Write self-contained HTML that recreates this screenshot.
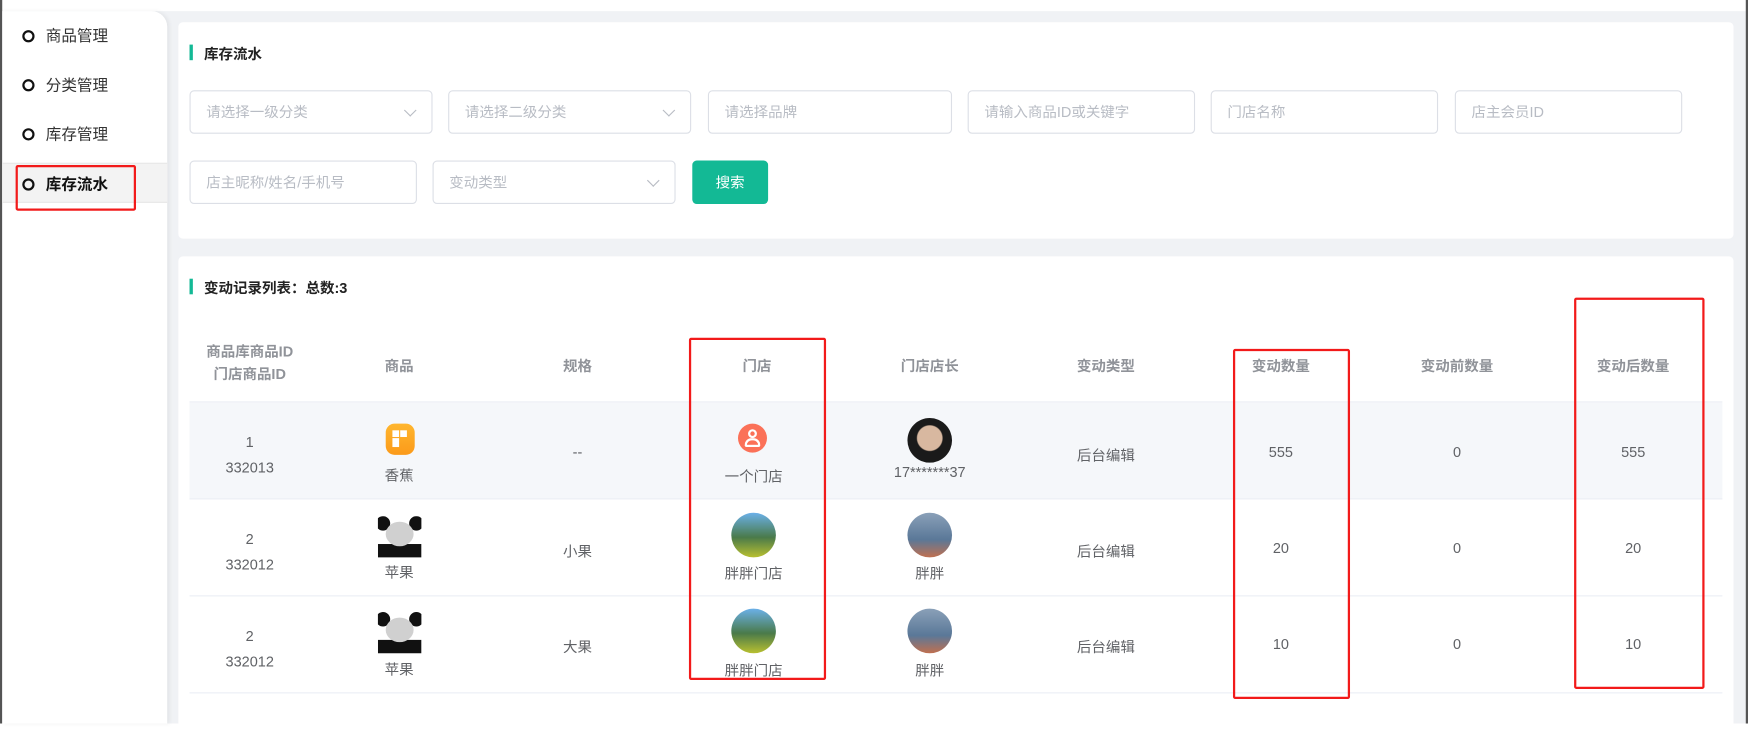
<!DOCTYPE html>
<html><head><meta charset="utf-8"><style>
*{margin:0;padding:0;box-sizing:border-box}
html,body{width:1748px;height:723px;overflow:hidden;background:#fff}
#w{position:absolute;left:0;top:0;width:1568px;height:649px;transform:scale(1.1148);transform-origin:0 0;background:#f0f2f5;font-family:"Liberation Sans","Noto Sans CJK SC",sans-serif;font-size:13px;color:#606266}
.a{position:absolute}
.menu{left:20px;font-size:14px;color:#333}
.menu i{position:absolute;left:0;top:3px;width:11px;height:11px;border:2px solid #111;border-radius:50%}
.menu span{position:absolute;left:21px;top:-2px;white-space:nowrap}
.card{background:#fff;border-radius:4px}
.ttl{font-weight:bold;color:#222;font-size:13px}
.ttl:before{content:"";position:absolute;left:-13px;top:2px;width:3px;height:14px;background:#13b995}
.in{border:1px solid #dcdfe6;border-radius:4px;height:39px;color:#b8bcc4;font-size:13px;line-height:37px;padding-left:14px;background:#fff}
.in.s:after{content:"";position:absolute;right:15px;top:13px;width:7px;height:7px;border-right:1px solid #b8bcc4;border-bottom:1px solid #b8bcc4;transform:rotate(45deg)}
.red{border:2px solid #f21a1a;border-radius:2px}
.c{text-align:center;width:160px;margin-left:-80px}
.h{color:#909399;font-weight:bold}
.row{left:170px;width:1375px;border-bottom:1px solid #ebeef5}
.av{position:absolute;border-radius:50%;width:40px;height:40px}
.pd{position:absolute;width:39px;height:37px;background:#fff;overflow:hidden}
.pd b{position:absolute;background:#111;border-radius:50%}
</style></head><body><div id="w">
<div class="a" style="left:0;top:0;width:1568px;height:10px;background:#fff"></div>
<div class="a" style="left:0;top:0;width:2px;height:649px;background:#555"></div>
<div class="a" style="left:1566px;top:0;width:2px;height:649px;background:#555"></div>
<div class="a" style="left:2px;top:10px;width:148px;height:639px;background:#fff;border-top-right-radius:14px;box-shadow:2px 0 4px rgba(0,0,0,.06)"></div>
<div class="a" style="left:2px;top:146px;width:148px;height:36px;background:#f3f3f3;border-top:1px solid #e8e8e8;border-bottom:1px solid #e8e8e8"></div>
<div class="a menu" style="top:24px"><i></i><span>商品管理</span></div>
<div class="a menu" style="top:68px"><i></i><span>分类管理</span></div>
<div class="a menu" style="top:112px"><i></i><span>库存管理</span></div>
<div class="a menu" style="top:157px;font-weight:bold;color:#111"><i></i><span>库存流水</span></div>
<div class="a red" style="left:14px;top:148px;width:108px;height:41px"></div>

<div class="a card" style="left:160px;top:20px;width:1395px;height:194px"></div>
<div class="a ttl" style="left:183px;top:38px">库存流水</div>
<div class="a in s" style="left:170px;top:81px;width:218px">请选择一级分类</div>
<div class="a in s" style="left:402px;top:81px;width:218px">请选择二级分类</div>
<div class="a in" style="left:635px;top:81px;width:219px">请选择品牌</div>
<div class="a in" style="left:868px;top:81px;width:204px">请输入商品ID或关键字</div>
<div class="a in" style="left:1086px;top:81px;width:204px">门店名称</div>
<div class="a in" style="left:1305px;top:81px;width:204px">店主会员ID</div>
<div class="a in" style="left:170px;top:144px;width:204px">店主昵称/姓名/手机号</div>
<div class="a in s" style="left:388px;top:144px;width:218px">变动类型</div>
<div class="a" style="left:621px;top:144px;width:68px;height:39px;background:#13b995;border-radius:4px;color:#fff;text-align:center;line-height:39px">搜索</div>

<div class="a card" style="left:160px;top:230px;width:1395px;height:430px"></div>
<div class="a ttl" style="left:183px;top:248px">变动记录列表：总数:3</div>

<div class="a row" style="top:290px;height:71px"></div>
<div class="a row" style="top:361px;height:87px;background:#f5f7fa"></div>
<div class="a row" style="top:448px;height:87px"></div>
<div class="a row" style="top:535px;height:87px"></div>

<div class="a c h" style="left:224px;top:306px;line-height:20px">商品库商品ID<br>门店商品ID</div>
<div class="a c h" style="left:358px;top:318px">商品</div>
<div class="a c h" style="left:518px;top:318px">规格</div>
<div class="a c h" style="left:679px;top:318px">门店</div>
<div class="a c h" style="left:834px;top:318px">门店店长</div>
<div class="a c h" style="left:992px;top:318px">变动类型</div>
<div class="a c h" style="left:1149px;top:318px">变动数量</div>
<div class="a c h" style="left:1307px;top:318px">变动前数量</div>
<div class="a c h" style="left:1465px;top:318px">变动后数量</div>

<!-- row1 -->
<div class="a c" style="left:224px;top:385px;line-height:23px">1<br>332013</div>
<div class="a" style="left:346px;top:380px;width:26px;height:28px;border-radius:8px;background:linear-gradient(#ffb62e,#fb9a1a)"><div class="a" style="left:6px;top:6px;width:6px;height:6px;background:#fff"></div><div class="a" style="left:13px;top:6px;width:6px;height:6px;background:#fff"></div><div class="a" style="left:6px;top:13px;width:6px;height:8px;background:#fff"></div></div>
<div class="a c" style="left:358px;top:416px">香蕉</div>
<div class="a c" style="left:518px;top:398px">--</div>
<div class="a" style="left:662px;top:380px;width:26px;height:26px;border-radius:50%;background:#fb7158"><div class="a" style="left:9px;top:5px;width:8px;height:8px;border-radius:50%;border:2px solid #fff"></div><div class="a" style="left:6px;top:13px;width:14px;height:8px;border-radius:7px 7px 2px 2px;border:2px solid #fff"></div></div>
<div class="a c" style="left:676px;top:417px">一个门店</div>
<div class="av" style="left:814px;top:375px;background:radial-gradient(circle at 50% 45%,#d8b8a0 0 11px,#1a1a1a 12px)"></div>
<div class="a c" style="left:834px;top:416px">17*******37</div>
<div class="a c" style="left:992px;top:398px">后台编辑</div>
<div class="a c" style="left:1149px;top:398px">555</div>
<div class="a c" style="left:1307px;top:398px">0</div>
<div class="a c" style="left:1465px;top:398px">555</div>

<!-- row2 -->
<div class="a c" style="left:224px;top:472px;line-height:23px">2<br>332012</div>
<div class="pd" style="left:339px;top:463px"><b style="left:-2px;top:0;width:13px;height:13px"></b><b style="left:28px;top:0;width:13px;height:13px"></b><b style="left:0;top:25px;width:39px;height:20px;border-radius:0"></b><div class="a" style="left:7px;top:5px;width:25px;height:22px;border-radius:50%;background:#d0d0d0"></div></div>
<div class="a c" style="left:358px;top:503px">苹果</div>
<div class="a c" style="left:518px;top:484px">小果</div>
<div class="av" style="left:656px;top:460px;width:40px;height:40px;background:linear-gradient(#6bb0e8,#4a7a4a 55%,#b8c030)"></div>
<div class="a c" style="left:676px;top:504px">胖胖门店</div>
<div class="av" style="left:814px;top:460px;background:linear-gradient(#8aa0b8,#5a7898 60%,#c07050)"></div>
<div class="a c" style="left:834px;top:504px">胖胖</div>
<div class="a c" style="left:992px;top:484px">后台编辑</div>
<div class="a c" style="left:1149px;top:484px">20</div>
<div class="a c" style="left:1307px;top:484px">0</div>
<div class="a c" style="left:1465px;top:484px">20</div>

<!-- row3 -->
<div class="a c" style="left:224px;top:559px;line-height:23px">2<br>332012</div>
<div class="pd" style="left:339px;top:549px"><b style="left:-2px;top:0;width:13px;height:13px"></b><b style="left:28px;top:0;width:13px;height:13px"></b><b style="left:0;top:25px;width:39px;height:20px;border-radius:0"></b><div class="a" style="left:7px;top:5px;width:25px;height:22px;border-radius:50%;background:#d0d0d0"></div></div>
<div class="a c" style="left:358px;top:590px">苹果</div>
<div class="a c" style="left:518px;top:570px">大果</div>
<div class="av" style="left:656px;top:546px;width:40px;height:40px;background:linear-gradient(#6bb0e8,#4a7a4a 55%,#b8c030)"></div>
<div class="a c" style="left:676px;top:591px">胖胖门店</div>
<div class="av" style="left:814px;top:546px;background:linear-gradient(#8aa0b8,#5a7898 60%,#c07050)"></div>
<div class="a c" style="left:834px;top:591px">胖胖</div>
<div class="a c" style="left:992px;top:570px">后台编辑</div>
<div class="a c" style="left:1149px;top:570px">10</div>
<div class="a c" style="left:1307px;top:570px">0</div>
<div class="a c" style="left:1465px;top:570px">10</div>

<div class="a red" style="left:618px;top:303px;width:123px;height:307px"></div>
<div class="a red" style="left:1106px;top:313px;width:105px;height:314px"></div>
<div class="a red" style="left:1412px;top:267px;width:117px;height:351px"></div>
</div></body></html>
